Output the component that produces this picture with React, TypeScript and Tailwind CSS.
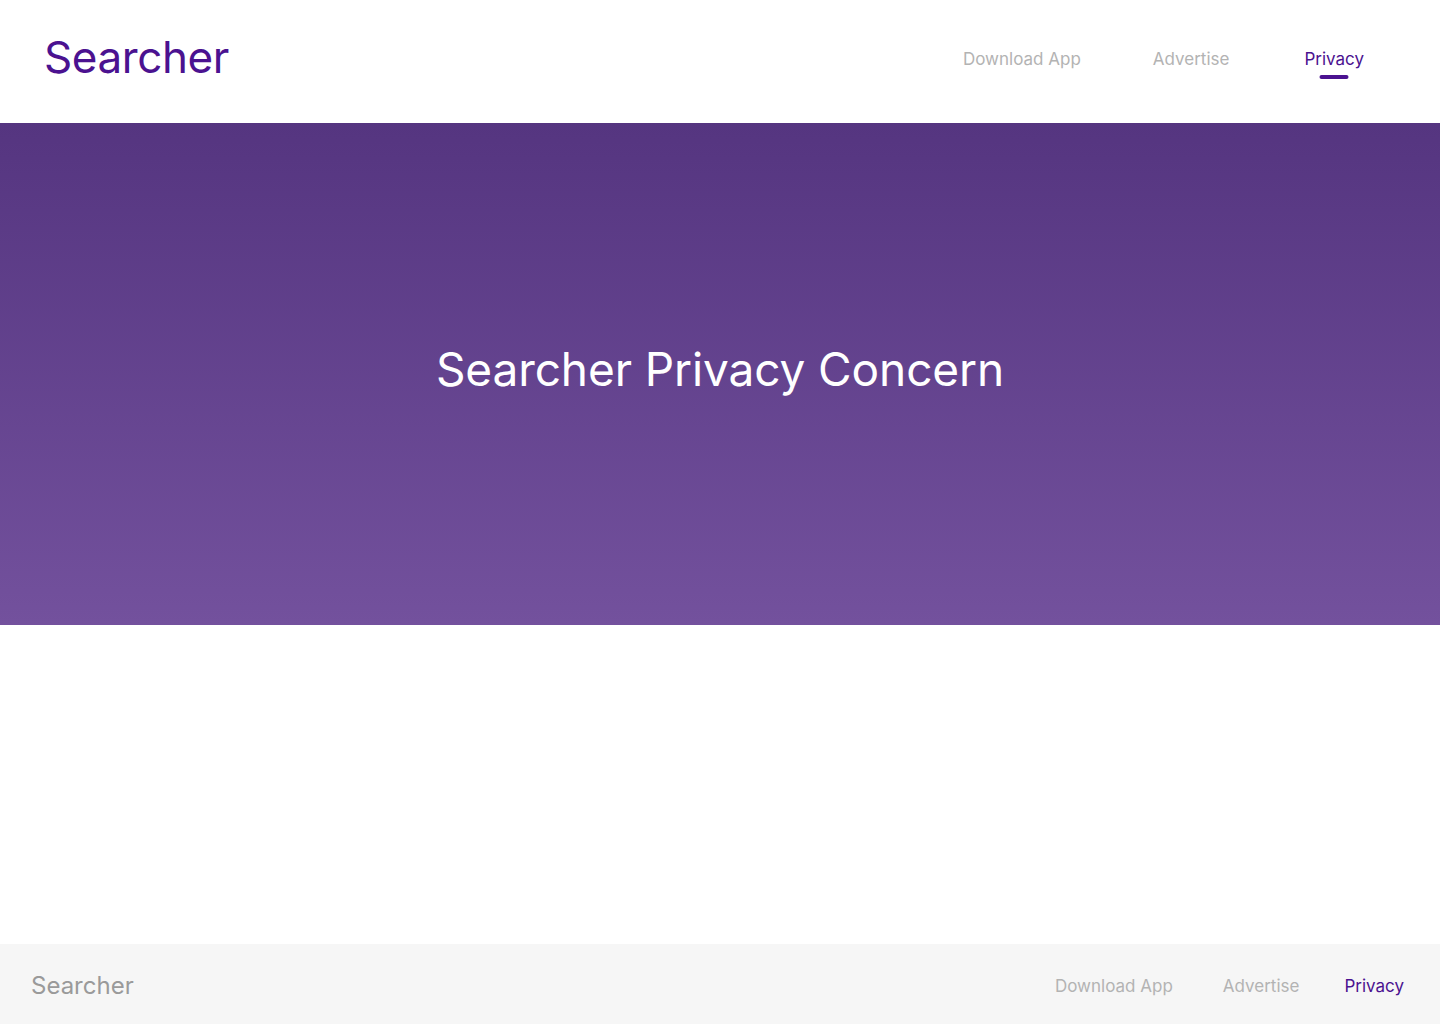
import clsx from 'clsx';

const NAV = ['Download App', 'Advertise', 'Privacy'];
const ACTIVE = 'Privacy';

function Header() {
  return (
    <header className="h-[123px] bg-white flex items-center justify-between pl-[44px] pr-[76px]">
      <div className="text-[44px] leading-none text-[#4b1290] tracking-[-0.4px] -mt-[10px]">Searcher</div>
      <nav className="flex items-center -mt-[6px]">
        {NAV.map((item, i) => (
          <div key={item} className={clsx('relative', i === 1 && 'ml-[72px]', i === 2 && 'ml-[75px]')}>
            <span
              className={clsx(
                'text-[17px] leading-none',
                item === ACTIVE ? 'text-[#4b1290]' : 'text-[#b3b3b3]'
              )}
            >
              {item}
            </span>
            {item === ACTIVE && (
              <span className="absolute left-1/2 -translate-x-1/2 top-[28px] w-[29px] h-[4px] rounded-full bg-[#4b1290]" />
            )}
          </div>
        ))}
      </nav>
    </header>
  );
}

function Hero() {
  return (
    <section className="h-[502px] bg-gradient-to-b from-[#553580] to-[#73519d] flex items-center justify-center">
      <h1 className="text-[46px] leading-none text-white -mt-[10px] tracking-[-0.1px]">Searcher Privacy Concern</h1>
    </section>
  );
}

function Footer() {
  return (
    <footer className="h-[80px] bg-[#f6f6f6] flex items-center justify-between pl-[31px] pr-[36px] pt-[4px]">
      <div className="text-[24px] leading-none text-[#9a9a9a]">Searcher</div>
      <nav className="flex items-center">
        {NAV.map((item, i) => (
          <span
            key={item}
            className={clsx(
              'text-[17px] leading-none',
              i === 1 && 'ml-[50px]',
              i === 2 && 'ml-[45px]',
              item === ACTIVE ? 'text-[#4b1290]' : 'text-[#b3b3b3]'
            )}
          >
            {item}
          </span>
        ))}
      </nav>
    </footer>
  );
}

export default function App() {
  return (
    <div className="w-[1440px] h-[1024px] flex flex-col bg-white font-['Inter',sans-serif]">
      <Header />
      <Hero />
      <main className="flex-1 bg-white" />
      <Footer />
    </div>
  );
}
